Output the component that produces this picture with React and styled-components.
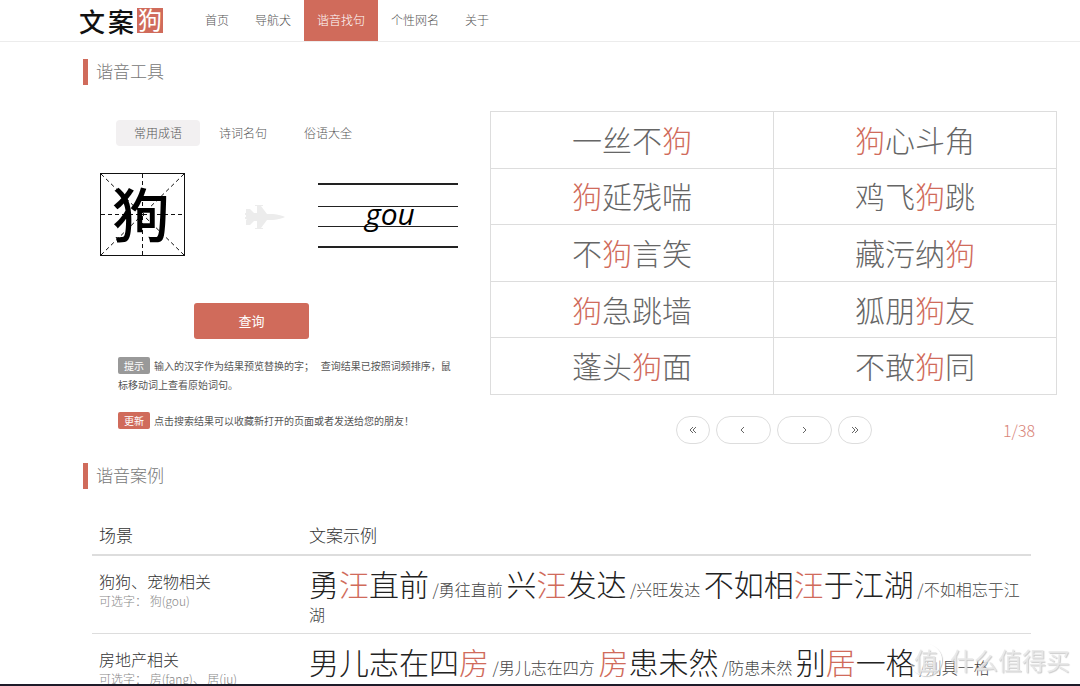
import React from 'react';
import styled, { createGlobalStyle } from 'styled-components';

const GlobalStyle = createGlobalStyle`
    * {
        box-sizing: border-box;
    }
    body {
        margin: 0;
        background: #fff;
        color: #333;
        font-family: 'Noto Sans CJK SC', sans-serif;
        font-weight: 300;
    }
    button, input {
        font-family: inherit;
        font-weight: inherit;
    }
`

const Header = styled.header`
    display: flex;
    height: 42px;
    padding-left: 79px;
    border-bottom: 1px solid #ececec;
`

const Logo = styled.a`
    display: flex;
    align-items: center;
    width: 113px;
    gap: 3px;
    color: #111;
    font-size: 26px;
    font-weight: 500;
    line-height: 24px;
    text-decoration: none;
`

const LogoSeal = styled.span`
    width: 26px;
    height: 25px;
    background: #d06b5b;
    color: #fff;
    font-size: 24px;
    font-weight: 400;
    line-height: 22px;
    text-align: center;
`

const Nav = styled.nav`
    display: flex;
`

const NavLink = styled.a`
    padding: 0 13px;
    background: ${props => props.$active ? '#d06b5b' : 'transparent'};
    color: ${props => props.$active ? '#fff' : '#555'};
    font-size: 12px;
    line-height: 40px;
    text-decoration: none;
`

const Main = styled.main`
    padding: 17px 23px 0 83px;
`

const SectionTitle = styled.h2`
    margin: 0;
    padding: 0 0 2px 8px;
    border-left: 5px solid #d06b5b;
    color: #777;
    font-size: 17px;
    font-weight: 300;
    line-height: 24px;
`

const Tool = styled.section`
    display: grid;
    grid-template-columns: 407px 1fr;
    padding: 26px 0 16px;
`

const Tabs = styled.div`
    display: flex;
    gap: 1px;
    padding: 9px 0 0 33px;
`

const Tab = styled.button`
    width: 84px;
    height: 26px;
    padding: 0 0 2px;
    border: 0;
    border-radius: 4px;
    background: ${props => props.$active ? '#f2f0f1' : 'transparent'};
    color: #555;
    font-size: 12px;
`

const Preview = styled.div`
    display: flex;
    align-items: center;
    padding: 27px 0 0 17px;
`

const Tile = styled.label`
    display: grid;
    grid-template-rows: 84px;
    width: 86px;
    svg, input {
        grid-area: 1 / 1;
        width: 100%;
        height: 100%;
    }
    input {
        padding: 0 4px 6px 0;
        border: 0;
        background: transparent;
        color: #000;
        font-size: 58px;
        font-weight: 500;
        line-height: 64px;
        text-align: center;
    }
`

const PlaneIcon = styled.svg`
    width: 40px;
    height: 26px;
    margin: 3px 33px 0 59px;
    fill: #ececec;
`

const Pinyin = styled.output`
    display: grid;
    width: 140px;
    height: 66px;
    svg, span {
        grid-area: 1 / 1;
    }
    span {
        padding-left: 4px;
        color: #000;
        font-family: 'Open Sans', sans-serif;
        font-size: 30px;
        font-style: italic;
        font-weight: 500;
        line-height: 64px;
        text-align: center;
    }
`

const QueryButton = styled.button`
    display: block;
    width: 115px;
    height: 36px;
    margin: 46px 0 17px 111px;
    padding: 0 0 2px;
    border: 0;
    border-radius: 3px;
    background: #d06b5b;
    color: #fff;
    font-size: 13px;
    font-weight: 400;
`

const Tip = styled.p`
    margin: 0 32px 17px 35px;
    color: #555;
    font-size: 10px;
    font-weight: 400;
    line-height: 19px;
`

const Badge = styled.span`
    display: inline-block;
    margin-right: 4px;
    padding: 0 6px;
    border-radius: 2px;
    background: ${props => props.$color};
    color: #fff;
    line-height: 17px;
`

const Results = styled.table`
    width: 100%;
    height: 284px;
    border-collapse: collapse;
    table-layout: fixed;
    td {
        padding: 0 0 2px;
        border: 1px solid #ddd;
        color: #666;
        font-size: 30px;
        line-height: 44px;
        text-align: center;
    }
`

const Mark = styled.span`
    color: #d06b5b;
`

const Pager = styled.div`
    display: grid;
    grid-template-columns: 1fr auto 1fr;
    align-items: center;
    padding-top: 21px;
`

const PageButtons = styled.div`
    grid-column: 2;
    display: flex;
    gap: 6px;
`

const PageButton = styled.button`
    display: flex;
    align-items: center;
    justify-content: center;
    width: ${props => props.$wide ? '55px' : '34px'};
    height: 28px;
    padding: 0;
    border: 1px solid #ddd;
    border-radius: 14px;
    background: #fff;
    svg {
        fill: none;
        stroke: #666;
    }
`

const PageCount = styled.span`
    padding-right: 22px;
    color: #d98579;
    font-size: 16px;
    text-align: right;
`

const Cases = styled.table`
    width: calc(100% - 35px);
    margin: 27px 0 0 9px;
    border-collapse: collapse;
    table-layout: fixed;
    th, td {
        padding: 0 7px;
        text-align: left;
        vertical-align: top;
    }
    th {
        border-bottom: 2px solid #ddd;
        font-size: 17px;
        font-weight: 300;
        line-height: 38px;
    }
    th:first-child {
        width: 210px;
    }
    td {
        padding-top: 6px;
        padding-bottom: 9px;
        border-bottom: 1px solid #ddd;
    }
`

const Scene = styled.div`
    padding-top: 7px;
    font-size: 16px;
    line-height: 24px;
    small {
        display: block;
        color: #888;
        font-size: 12px;
        line-height: 16px;
    }
`

const Phrases = styled.div`
    color: #444;
    font-size: 16px;
    line-height: 20px;
    strong {
        color: #222;
        font-size: 30px;
        font-weight: 300;
        line-height: 42px;
    }
`

const Watermark = styled.div`
    position: fixed;
    right: 10px;
    bottom: 10px;
    display: flex;
    align-items: center;
    gap: 8px;
    color: rgba(232, 232, 232, 0.9);
    font-size: 24px;
    font-weight: 400;
    line-height: 32px;
    text-shadow: 1px 1px 1px #ccc;
    span {
        width: 32px;
        border-radius: 50%;
        background: rgba(255, 255, 255, 0.5);
        box-shadow: 1px 1px 1px #ccc;
        text-align: center;
    }
`

const BottomEdge = styled.div`
    position: fixed;
    right: 0;
    bottom: 0;
    left: 0;
    height: 2px;
    background: #1e1b29;
`

const navItems = ['首页', '导航犬', '谐音找句', '个性网名', '关于'];

const tabItems = ['常用成语', '诗词名句', '俗语大全'];

const resultRows = [
    ['一丝不狗', '狗心斗角'],
    ['狗延残喘', '鸡飞狗跳'],
    ['不狗言笑', '藏污纳狗'],
    ['狗急跳墙', '狐朋狗友'],
    ['蓬头狗面', '不敢狗同'],
];

const cases = [
    {
        scene: '狗狗、宠物相关',
        chars: '可选字： 狗(gou)',
        phrases: [
            ['勇汪直前', '勇往直前'],
            ['兴汪发达', '兴旺发达'],
            ['不如相汪于江湖', '不如相忘于江湖'],
        ],
    },
    {
        scene: '房地产相关',
        chars: '可选字： 房(fang)、 居(ju)',
        phrases: [
            ['男儿志在四房', '男儿志在四方'],
            ['房患未然', '防患未然'],
            ['别居一格', '别具一格'],
        ],
    },
];

const Highlight = ({ text }) => (
    text.split(/([狗汪房居])/).map((part, i) => (
        i % 2 ? <Mark key={i}>{part}</Mark> : part
    ))
)

const CharTile = () => (
    <Tile>
        <svg viewBox='0 0 86 84' fill='none' stroke='#111' aria-hidden='true'>
            <rect x='0.5' y='0.5' width='84' height='82' />
            <path d='M1 1L84 82M84 1L1 82M42.5 1V82M1 41.5H84' strokeDasharray='4 3' />
        </svg>
        <input defaultValue='狗' maxLength={1} aria-label='汉字' />
    </Tile>
)

const Plane = () => (
    <PlaneIcon viewBox='0 0 40 26' aria-hidden='true'>
        <path d='M10 1h8v1h-2l6 8h6q8 1 12 3-4 2-12 3h-6l-6 8h2v1h-8v-1h2v-7H9l-4 4H1v-5l1-1H0v-2h1v-2H0v-2h2L1 9V5h4l4 4h3V2h-2z' />
    </PlaneIcon>
)

const PinyinLines = () => (
    <Pinyin>
        <svg width='140' height='66' stroke='#222' aria-hidden='true'>
            <path d='M0 2H140M0 65H140' strokeWidth='2' />
            <path d='M0 24.5H140M0 44.5H140' />
        </svg>
        <span>gou</span>
    </Pinyin>
)

const Arrow = ({ d }) => (
    <svg width='10' height='10' viewBox='0 0 10 10' aria-hidden='true'>
        <path d={d} />
    </svg>
)

const App = () => {
    return (
        <>
            <GlobalStyle />
            <Header>
                <Logo href='#'>
                    <span>文</span>
                    <span>案</span>
                    <LogoSeal>狗</LogoSeal>
                </Logo>
                <Nav>
                    {navItems.map(item => (
                        <NavLink key={item} href='#' $active={item === '谐音找句'}>{item}</NavLink>
                    ))}
                </Nav>
            </Header>
            <Main>
                <SectionTitle>谐音工具</SectionTitle>
                <Tool>
                    <div>
                        <Tabs>
                            {tabItems.map((item, i) => (
                                <Tab key={item} type='button' $active={i === 0}>{item}</Tab>
                            ))}
                        </Tabs>
                        <Preview>
                            <CharTile />
                            <Plane />
                            <PinyinLines />
                        </Preview>
                        <QueryButton type='button'>查询</QueryButton>
                        <Tip>
                            <Badge $color='#999'>提示</Badge>
                            输入的汉字作为结果预览替换的字；&nbsp;&nbsp; 查询结果已按照词频排序，鼠标移动词上查看原始词句。
                        </Tip>
                        <Tip>
                            <Badge $color='#d06b5b'>更新</Badge>
                            点击搜索结果可以收藏新打开的页面或者发送给您的朋友！
                        </Tip>
                    </div>
                    <div>
                        <Results>
                            <tbody>
                                {resultRows.map(row => (
                                    <tr key={row[0]}>
                                        {row.map(word => (
                                            <td key={word}><Highlight text={word} /></td>
                                        ))}
                                    </tr>
                                ))}
                            </tbody>
                        </Results>
                        <Pager>
                            <PageButtons>
                                <PageButton type='button' aria-label='第一页'><Arrow d='M5 2L2 5l3 3M8 2L5 5l3 3' /></PageButton>
                                <PageButton type='button' aria-label='上一页' $wide><Arrow d='M6 2L3 5l3 3' /></PageButton>
                                <PageButton type='button' aria-label='下一页' $wide><Arrow d='M4 2l3 3-3 3' /></PageButton>
                                <PageButton type='button' aria-label='最后一页'><Arrow d='M2 2l3 3-3 3M5 2l3 3-3 3' /></PageButton>
                            </PageButtons>
                            <PageCount>1/38</PageCount>
                        </Pager>
                    </div>
                </Tool>
                <SectionTitle>谐音案例</SectionTitle>
                <Cases>
                    <thead>
                        <tr>
                            <th>场景</th>
                            <th>文案示例</th>
                        </tr>
                    </thead>
                    <tbody>
                        {cases.map(item => (
                            <tr key={item.scene}>
                                <td>
                                    <Scene>{item.scene}<small>{item.chars}</small></Scene>
                                </td>
                                <td>
                                    <Phrases>
                                        {item.phrases.map(([word, origin]) => (
                                            <React.Fragment key={word}>
                                                <strong><Highlight text={word} /></strong> /{origin}{' '}
                                            </React.Fragment>
                                        ))}
                                    </Phrases>
                                </td>
                            </tr>
                        ))}
                    </tbody>
                </Cases>
            </Main>
            <Watermark><span>值</span>什么值得买</Watermark>
            <BottomEdge />
        </>
    )
}

export default App;
